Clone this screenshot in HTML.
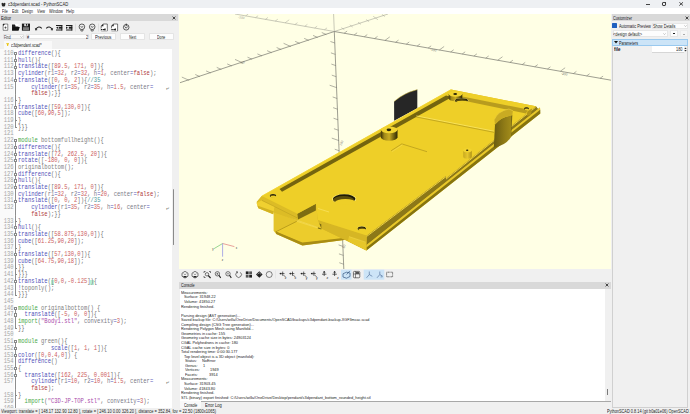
<!DOCTYPE html>
<html><head><meta charset="utf-8">
<style>
*{box-sizing:border-box;margin:0;padding:0}
html,body{width:690px;height:414px;overflow:hidden;background:#f0f0f0;font-family:"Liberation Sans",sans-serif;color:#000;position:relative}
i{font-style:normal}
.abs{position:absolute}
.ln{position:absolute;left:0;width:13.6px;text-align:right;font-family:"Liberation Mono",monospace;font-size:6.3px;line-height:6.7px;color:#a4a4a4;white-space:pre;transform:scaleX(0.87);transform-origin:100% 50%}
.cl{position:absolute;left:17.9px;font-family:"Liberation Mono",monospace;font-size:6.4px;line-height:6.7px;white-space:pre;transform:scaleX(0.859);transform-origin:0 50%}
.fbox{position:absolute;left:14.3px;width:3.2px;height:3.2px;border:0.6px solid #8a8a8a;background:#fff}
.fend{position:absolute;left:15.2px;width:1.8px;height:3.4px;border-left:0.7px solid #8a8a8a;border-bottom:0.7px solid #8a8a8a}
.wrapg{position:absolute;left:165.5px;font-size:5.5px;line-height:6.7px;color:#444}
.con{position:absolute;font-size:4.3px;line-height:5px;color:#1a1a1a;white-space:pre;transform:scaleX(0.87);transform-origin:0 50%}

</style></head><body>

<div class="abs" style="left:0;top:0;width:690px;height:8px;background:#eef0f3"></div>
<svg class="abs" style="left:0.8px;top:1.6px" width="5" height="5" viewBox="0 0 10 10"><path d="M1 3 Q3 0 5 3 Q7 0 9 3 L8 8 Q5 10 2 8Z" fill="#2a2a2a"/></svg>
<div class="abs" style="left:8.30px;top:1.88px;font-size:4.9px;line-height:5.63px;color:#1a1a1a;white-space:pre;transform:scaleX(0.855);transform-origin:0 50%;">c3dpendant.scad - PythonSCAD</div>
<div class="abs" style="left:646.2px;top:3.5px;width:3.5px;height:0.5px;background:#444"></div>
<div class="abs" style="left:661.8px;top:2.4px;width:4px;height:3.6px;border:0.8px solid #222;border-radius:1.2px"></div><div class="abs" style="left:662.8px;top:1.9px;width:3.5px;height:0.6px;background:#444"></div>
<svg class="abs" style="left:679px;top:2.2px" width="4.4" height="3.8" viewBox="0 0 4.4 3.8"><path d="M0.3 0.2 L4.1 3.6 M4.1 0.2 L0.3 3.6" stroke="#222" stroke-width="0.8"/></svg>
<div class="abs" style="left:0;top:8px;width:690px;height:5.8px;background:#ffffff"></div>
<div class="abs" style="left:2.10px;top:9.24px;font-size:4.8px;line-height:5.52px;color:#1a1a1a;white-space:pre;transform:scaleX(0.750);transform-origin:0 50%;">File</div><div class="abs" style="left:11.60px;top:9.24px;font-size:4.8px;line-height:5.52px;color:#1a1a1a;white-space:pre;transform:scaleX(0.774);transform-origin:0 50%;">Edit</div><div class="abs" style="left:22.00px;top:9.24px;font-size:4.8px;line-height:5.52px;color:#1a1a1a;white-space:pre;transform:scaleX(0.736);transform-origin:0 50%;">Design</div><div class="abs" style="left:37.10px;top:9.24px;font-size:4.8px;line-height:5.52px;color:#1a1a1a;white-space:pre;transform:scaleX(0.785);transform-origin:0 50%;">View</div><div class="abs" style="left:49.30px;top:9.24px;font-size:4.8px;line-height:5.52px;color:#1a1a1a;white-space:pre;transform:scaleX(0.814);transform-origin:0 50%;">Window</div><div class="abs" style="left:66.10px;top:9.24px;font-size:4.8px;line-height:5.52px;color:#1a1a1a;white-space:pre;transform:scaleX(0.821);transform-origin:0 50%;">Help</div>
<div class="abs" style="left:0;top:14px;width:178px;height:7px;background:#d9d9d9"></div>
<div class="abs" style="left:0.90px;top:15.74px;font-size:4.8px;line-height:5.52px;color:#1a1a1a;white-space:pre;transform:scaleX(0.806);transform-origin:0 50%;">Editor</div><svg class="abs" style="left:172px;top:15.9px" width="4" height="4" viewBox="0 0 4 4"><path d="M0.6 0.6 L3.4 3.4 M3.4 0.6 L0.6 3.4" stroke="#222" stroke-width="0.8"/></svg><svg class="abs" style="left:0;top:21px" width="178" height="12" viewBox="0 21 178 12"><path d="M2.6 23.4 H8.3 V30.8 H2.6 Z" fill="#fff"/><path d="M3.1 24 H7.8 V30.3 H3.1 Z" fill="none" stroke="#333" stroke-width="0.6"/><path d="M3 23.9 H5 L3 25.9Z" fill="#1e1e1e"/><path d="M4.4 27.6 H6.6 M5.5 26.5 V28.7" stroke="#1e1e1e" stroke-width="0.6"/><path d="M12 24.4 H14.6 L15.6 25.2 H18.4 V30.6 H12 Z" fill="#1e1e1e"/><path d="M15.2 24 L18.6 24.3 L19 26.5 L15.5 26.5Z" fill="#fff"/><path d="M13.2 27 H19.8 L18.6 30.6 H12 Z" fill="#111"/><path d="M21.9 23.6 H30 V30.7 H21.9 Z" fill="#1e1e1e"/><rect x="24.3" y="23.6" width="3.4" height="2.6" fill="#f4f4f4"/><rect x="25.8" y="23.9" width="1.2" height="1.8" fill="#1e1e1e"/><rect x="23" y="27.2" width="6" height="3" fill="#7a7a7a"/><path d="M36 29 Q38.5 25.3 41.8 28.3" stroke="#1e1e1e" stroke-width="1.1" fill="none"/><path d="M34.8 27.8 L37.5 30 L35.4 30.4Z" fill="#1e1e1e"/><path d="M52 29 Q49.5 25.3 46.2 28.3" stroke="#1e1e1e" stroke-width="1.1" fill="none"/><path d="M53.2 27.8 L50.5 30 L52.6 30.4Z" fill="#1e1e1e"/><rect x="56" y="25" width="6.3" height="1" fill="#1e1e1e"/><rect x="56" y="29.5" width="6.3" height="1" fill="#1e1e1e"/><rect x="58.8" y="26.7" width="3.5" height="2" fill="#1e1e1e"/><rect x="61.3" y="25" width="1" height="5.5" fill="#1e1e1e"/><path d="M58.2 26.5 L56 27.7 L58.2 28.9Z" fill="#1e1e1e"/><rect x="66" y="25" width="6.3" height="1" fill="#1e1e1e"/><rect x="66" y="29.5" width="6.3" height="1" fill="#1e1e1e"/><rect x="68.8" y="26.7" width="3.5" height="2" fill="#1e1e1e"/><rect x="71.3" y="25" width="1" height="5.5" fill="#1e1e1e"/><path d="M66 26.5 L68 27.7 L66 28.9Z" fill="#1e1e1e"/><rect x="75.5" y="23.5" width="0.5" height="8" fill="#cfcfcf"/><circle cx="81.9" cy="26.8" r="2.8" fill="none" stroke="#1e1e1e" stroke-width="0.7"/><path d="M80.9 29.6 V31 H82.9 V29.6" stroke="#1e1e1e" stroke-width="0.6" fill="none"/><path d="M80.60000000000001 26 L81.9 27.6 L83.2 26" stroke="#1e1e1e" stroke-width="0.6" fill="none"/><circle cx="92.2" cy="26.8" r="2.8" fill="none" stroke="#1e1e1e" stroke-width="0.7"/><path d="M91.2 29.6 V31 H93.2 V29.6" stroke="#1e1e1e" stroke-width="0.6" fill="none"/><path d="M90.9 26 L92.2 27.6 L93.5 26" stroke="#1e1e1e" stroke-width="0.6" fill="none"/><rect x="98.5" y="23.5" width="0.5" height="8" fill="#cfcfcf"/><path d="M103.2 24 H107.3 V30.8 H101.2 V26 Z" fill="#fff" stroke="#1e1e1e" stroke-width="0.6"/><path d="M101 26.2 L103.4 23.8 L103.4 26.2Z" fill="#1e1e1e"/><rect x="100.7" y="28.3" width="6" height="2.6" fill="#fff"/><path d="M101 29.6 h1.5 M103 29.6 h1.5 M105 28.6 v2" stroke="#1e1e1e" stroke-width="1.3"/><path d="M113.5 24 H117.6 V30.8 H111.5 V26 Z" fill="#fff" stroke="#1e1e1e" stroke-width="0.6"/><path d="M111.3 26.2 L113.7 23.8 L113.7 26.2Z" fill="#1e1e1e"/><rect x="111.0" y="28.3" width="6" height="2.6" fill="#fff"/><path d="M111.3 29.6 h1.5 M113.3 29.6 h1.5 M115.3 28.6 v2" stroke="#1e1e1e" stroke-width="1.3"/><circle cx="126.2" cy="27.3" r="2.8" fill="none" stroke="#1e1e1e" stroke-width="0.7"/><path d="M124.6 26.4 L126.2 28.2 L127.8 26.4" stroke="#1e1e1e" stroke-width="0.7" fill="none"/><rect x="125.8" y="23.6" width="0.8" height="2.5" fill="#1e1e1e"/></svg>
<div class="abs" style="left:2.6px;top:34.2px;width:21.5px;height:5px;background:#fafafa;border:0.5px solid #e2e2e2;border-radius:0.6px"></div>
<div class="abs" style="left:3.50px;top:34.91px;font-size:4.5px;line-height:5.17px;color:#333;white-space:pre;transform:scaleX(0.754);transform-origin:0 50%;">Find</div>
<svg class="abs" style="left:19.5px;top:35.6px" width="3" height="2" viewBox="0 0 3 2"><path d="M0.3 0.4 L1.5 1.5 L2.7 0.4" stroke="#777" stroke-width="0.4" fill="none"/></svg>
<div class="abs" style="left:26px;top:34.2px;width:62.7px;height:5px;background:#fff;border:0.4px solid #e4e4e4"></div>
<div class="abs" style="left:27.30px;top:34.91px;font-size:4.5px;line-height:5.17px;color:#222;white-space:pre;transform:scaleX(0.840);transform-origin:0 50%;">#</div><div class="abs" style="left:85.80px;top:34.91px;font-size:4.5px;line-height:5.17px;color:#222;white-space:pre;transform:scaleX(0.840);transform-origin:0 50%;">2</div>
<div class="abs" style="left:90.8px;top:33px;width:25.2px;height:7.3px;background:#fdfdfd;border:0.5px solid #e4e4e4;border-radius:0.8px;font-size:3.9px;line-height:6.5px;text-align:center;color:#222"></div><div class="abs" style="left:95.15px;top:34.91px;font-size:4.5px;line-height:5.17px;color:#222;white-space:pre;transform:scaleX(0.942);transform-origin:0 50%;">Previous</div>
<div class="abs" style="left:119.7px;top:33px;width:25.2px;height:7.3px;background:#fdfdfd;border:0.5px solid #e4e4e4;border-radius:0.8px;font-size:3.9px;line-height:6.5px;text-align:center;color:#222"></div><div class="abs" style="left:128.70px;top:34.91px;font-size:4.5px;line-height:5.17px;color:#222;white-space:pre;transform:scaleX(0.778);transform-origin:0 50%;">Next</div>
<div class="abs" style="left:148.6px;top:33px;width:25.7px;height:7.3px;background:#fdfdfd;border:0.5px solid #e4e4e4;border-radius:0.8px;font-size:3.9px;line-height:6.5px;text-align:center;color:#222"></div><div class="abs" style="left:157.40px;top:34.91px;font-size:4.5px;line-height:5.17px;color:#222;white-space:pre;transform:scaleX(0.762);transform-origin:0 50%;">Done</div>
<div class="abs" style="left:3.9px;top:41px;width:48.3px;height:7.5px;background:#f9f9f9"></div>
<svg class="abs" style="left:5.6px;top:42.6px" width="3.4" height="3.4" viewBox="0 0 4 4"><path d="M0 0.3 H4 L2.6 2 V3.8 H1.4 V2 Z" fill="#e8c000"/></svg>
<div class="abs" style="left:10.60px;top:42.95px;font-size:4.6px;line-height:5.29px;color:#222;white-space:pre;transform:scaleX(0.828);transform-origin:0 50%;font-style:italic;">c3dpendant.scad*</div>
<div class="abs" style="left:0;top:48.5px;width:172px;height:359px;background:#fff;overflow:hidden">
<div class="abs" style="left:0;top:0;width:14px;height:360px;background:#fafafa"></div>
<div class="abs" style="left:0;top:-48.5px;width:172px;height:408px">
<div class="ln" style="top:51.00px">110</div>
<div class="ln" style="top:57.70px">111</div>
<div class="ln" style="top:64.40px">112</div>
<div class="ln" style="top:71.10px">113</div>
<div class="ln" style="top:77.80px">114</div>
<div class="ln" style="top:84.50px">115</div>
<div class="ln" style="top:97.90px">116</div>
<div class="ln" style="top:104.60px">117</div>
<div class="ln" style="top:111.30px">118</div>
<div class="ln" style="top:118.00px">119</div>
<div class="ln" style="top:124.70px">120</div>
<div class="ln" style="top:131.40px">121</div>
<div class="ln" style="top:138.10px">122</div>
<div class="ln" style="top:144.80px">123</div>
<div class="ln" style="top:151.50px">124</div>
<div class="ln" style="top:158.20px">125</div>
<div class="ln" style="top:164.90px">126</div>
<div class="ln" style="top:171.60px">127</div>
<div class="ln" style="top:178.30px">128</div>
<div class="ln" style="top:185.00px">129</div>
<div class="ln" style="top:191.70px">130</div>
<div class="ln" style="top:198.40px">131</div>
<div class="ln" style="top:205.10px">132</div>
<div class="ln" style="top:218.50px">133</div>
<div class="ln" style="top:225.20px">134</div>
<div class="ln" style="top:231.90px">135</div>
<div class="ln" style="top:238.60px">136</div>
<div class="ln" style="top:245.30px">137</div>
<div class="ln" style="top:252.00px">138</div>
<div class="ln" style="top:258.70px">139</div>
<div class="ln" style="top:265.40px">140</div>
<div class="ln" style="top:272.10px">141</div>
<div class="ln" style="top:278.80px">142</div>
<div class="ln" style="top:285.50px">143</div>
<div class="ln" style="top:292.20px">144</div>
<div class="ln" style="top:298.90px">145</div>
<div class="ln" style="top:305.60px">146</div>
<div class="ln" style="top:312.30px">147</div>
<div class="ln" style="top:319.00px">148</div>
<div class="ln" style="top:325.70px">149</div>
<div class="ln" style="top:332.40px">150</div>
<div class="ln" style="top:339.10px">151</div>
<div class="ln" style="top:345.80px">152</div>
<div class="ln" style="top:352.50px">153</div>
<div class="ln" style="top:359.20px">154</div>
<div class="ln" style="top:365.90px">155</div>
<div class="ln" style="top:372.60px">156</div>
<div class="ln" style="top:379.30px">157</div>
<div class="ln" style="top:392.70px">158</div>
<div class="ln" style="top:399.40px">159</div>
<div class="ln" style="top:406.10px">160</div>
<div class="abs" style="left:15.3px;top:342.40px;width:0.7px;height:77.60px;background:#8e8e8e"></div>
<div class="abs" style="left:15.3px;top:308.90px;width:0.7px;height:20.10px;background:#8e8e8e"></div>
<div class="abs" style="left:15.3px;top:141.40px;width:0.7px;height:154.10px;background:#8e8e8e"></div>
<div class="abs" style="left:15.3px;top:54.30px;width:0.7px;height:73.70px;background:#8e8e8e"></div>
<div class="fbox" style="top:52.10px"></div>
<div class="fbox" style="top:58.80px"></div>
<div class="fbox" style="top:65.50px"></div>
<div class="fbox" style="top:78.90px"></div>
<div class="wrapg" style="top:84.50px">&#x2936;</div>
<div class="abs" style="left:14.5px;top:94.00px;width:1.6px;height:1px;background:#999"></div>
<div class="fend" style="top:97.90px"></div>
<div class="fbox" style="top:105.70px"></div>
<div class="fend" style="top:118.00px"></div>
<div class="fend" style="top:124.70px"></div>
<div class="fbox" style="top:139.20px"></div>
<div class="fbox" style="top:145.90px"></div>
<div class="fbox" style="top:152.60px"></div>
<div class="fbox" style="top:159.30px"></div>
<div class="fbox" style="top:172.70px"></div>
<div class="fbox" style="top:179.40px"></div>
<div class="fbox" style="top:186.10px"></div>
<div class="fbox" style="top:199.50px"></div>
<div class="wrapg" style="top:205.10px">&#x2936;</div>
<div class="abs" style="left:14.5px;top:214.60px;width:1.6px;height:1px;background:#999"></div>
<div class="fend" style="top:218.50px"></div>
<div class="fbox" style="top:226.30px"></div>
<div class="fbox" style="top:233.00px"></div>
<div class="fend" style="top:245.30px"></div>
<div class="fbox" style="top:253.10px"></div>
<div class="fend" style="top:265.40px"></div>
<div class="fend" style="top:272.10px"></div>
<div class="abs" style="left:50.80px;top:279.70px;width:3.5px;height:5.2px;background:#b8f0d8"></div>
<div class="abs" style="left:90.40px;top:279.70px;width:3.5px;height:5.2px;background:#b8f0d8"></div>
<div class="fbox" style="top:279.90px"></div>
<div class="fend" style="top:292.20px"></div>
<div class="fbox" style="top:306.70px"></div>
<div class="fbox" style="top:313.40px"></div>
<div class="fend" style="top:325.70px"></div>
<div class="fbox" style="top:340.20px"></div>
<div class="fbox" style="top:346.90px"></div>
<div class="fbox" style="top:353.60px"></div>
<div class="fbox" style="top:367.00px"></div>
<div class="fbox" style="top:373.70px"></div>
<div class="wrapg" style="top:379.30px">&#x2936;</div>
<div class="abs" style="left:14.5px;top:388.80px;width:1.6px;height:1px;background:#999"></div>
<div class="fend" style="top:392.70px"></div>
<div class="cl" style="top:51.00px"><i style="color:#5050b8">difference</i><i style="color:#707070">(</i><i style="color:#707070">)</i><i style="color:#707070">{</i></div>
<div class="cl" style="top:57.70px"><i style="color:#5050b8">hull</i><i style="color:#707070">(</i><i style="color:#707070">)</i><i style="color:#707070">{</i></div>
<div class="cl" style="top:64.40px"><i style="color:#5050b8">translate</i><i style="color:#707070">(</i><i style="color:#707070">[</i><i style="color:#cc5c5c">89.5</i><i style="color:#707070">,</i> <i style="color:#cc5c5c">171</i><i style="color:#707070">,</i> <i style="color:#cc5c5c">0</i><i style="color:#707070">]</i><i style="color:#707070">)</i><i style="color:#707070">{</i></div>
<div class="cl" style="top:71.10px"><i style="color:#5050b8">cylinder</i><i style="color:#707070">(</i><i style="color:#7a7a86">r1</i><i style="color:#5a5ab8">=</i><i style="color:#cc5c5c">32</i><i style="color:#707070">,</i> <i style="color:#7a7a86">r2</i><i style="color:#5a5ab8">=</i><i style="color:#cc5c5c">32</i><i style="color:#707070">,</i> <i style="color:#7a7a86">h</i><i style="color:#5a5ab8">=</i><i style="color:#cc5c5c">1</i><i style="color:#707070">,</i> <i style="color:#7a7a86">center</i><i style="color:#5a5ab8">=</i><i style="color:#b03a3a">false</i><i style="color:#707070">)</i><i style="color:#707070">;</i></div>
<div class="cl" style="top:77.80px"><i style="color:#5050b8">translate</i><i style="color:#707070">(</i><i style="color:#707070">[</i><i style="color:#cc5c5c">0</i><i style="color:#707070">,</i> <i style="color:#cc5c5c">0</i><i style="color:#707070">,</i> <i style="color:#cc5c5c">2</i><i style="color:#707070">]</i><i style="color:#707070">)</i><i style="color:#707070">{</i><i style="color:#4a9a9a">//35</i></div>
<div class="cl" style="top:84.50px">    <i style="color:#5050b8">cylinder</i><i style="color:#707070">(</i><i style="color:#7a7a86">r1</i><i style="color:#5a5ab8">=</i><i style="color:#cc5c5c">35</i><i style="color:#707070">,</i> <i style="color:#7a7a86">r2</i><i style="color:#5a5ab8">=</i><i style="color:#cc5c5c">35</i><i style="color:#707070">,</i> <i style="color:#7a7a86">h</i><i style="color:#5a5ab8">=</i><i style="color:#cc5c5c">1.5</i><i style="color:#707070">,</i> <i style="color:#7a7a86">center</i><i style="color:#5a5ab8">=</i></div>
<div class="cl" style="top:91.20px">    <i style="color:#b03a3a">false</i><i style="color:#707070">)</i><i style="color:#707070">;</i><i style="color:#707070">}</i><i style="color:#707070">}</i></div>
<div class="cl" style="top:97.90px"><i style="color:#707070">}</i></div>
<div class="cl" style="top:104.60px"><i style="color:#5050b8">translate</i><i style="color:#707070">(</i><i style="color:#707070">[</i><i style="color:#cc5c5c">59</i><i style="color:#707070">,</i><i style="color:#cc5c5c">130</i><i style="color:#707070">,</i><i style="color:#cc5c5c">0</i><i style="color:#707070">]</i><i style="color:#707070">)</i><i style="color:#707070">{</i></div>
<div class="cl" style="top:111.30px"><i style="color:#5050b8">cube</i><i style="color:#707070">(</i><i style="color:#707070">[</i><i style="color:#cc5c5c">60</i><i style="color:#707070">,</i><i style="color:#cc5c5c">90</i><i style="color:#707070">,</i><i style="color:#cc5c5c">5</i><i style="color:#707070">]</i><i style="color:#707070">)</i><i style="color:#707070">;</i></div>
<div class="cl" style="top:118.00px"><i style="color:#707070">}</i></div>
<div class="cl" style="top:124.70px"><i style="color:#707070">}</i><i style="color:#707070">}</i><i style="color:#707070">}</i></div>
<div class="cl" style="top:131.40px"></div>
<div class="cl" style="top:138.10px"><i style="color:#48a848">module</i> <i style="color:#808080">bottomfullheight</i><i style="color:#707070">(</i><i style="color:#707070">)</i><i style="color:#707070">{</i></div>
<div class="cl" style="top:144.80px"><i style="color:#5050b8">difference</i><i style="color:#707070">(</i><i style="color:#707070">)</i><i style="color:#707070">{</i></div>
<div class="cl" style="top:151.50px"><i style="color:#5050b8">translate</i><i style="color:#707070">(</i><i style="color:#707070">[</i><i style="color:#cc5c5c">72</i><i style="color:#707070">,</i> <i style="color:#cc5c5c">262.5</i><i style="color:#707070">,</i> <i style="color:#cc5c5c">20</i><i style="color:#707070">]</i><i style="color:#707070">)</i><i style="color:#707070">{</i></div>
<div class="cl" style="top:158.20px"><i style="color:#5050b8">rotate</i><i style="color:#707070">(</i><i style="color:#707070">[</i><i style="color:#cc5c5c">-180</i><i style="color:#707070">,</i> <i style="color:#cc5c5c">0</i><i style="color:#707070">,</i> <i style="color:#cc5c5c">0</i><i style="color:#707070">]</i><i style="color:#707070">)</i><i style="color:#707070">{</i></div>
<div class="cl" style="top:164.90px"><i style="color:#808080">originalbottom</i><i style="color:#707070">(</i><i style="color:#707070">)</i><i style="color:#707070">;</i></div>
<div class="cl" style="top:171.60px"><i style="color:#5050b8">difference</i><i style="color:#707070">(</i><i style="color:#707070">)</i><i style="color:#707070">{</i></div>
<div class="cl" style="top:178.30px"><i style="color:#5050b8">hull</i><i style="color:#707070">(</i><i style="color:#707070">)</i><i style="color:#707070">{</i></div>
<div class="cl" style="top:185.00px"><i style="color:#5050b8">translate</i><i style="color:#707070">(</i><i style="color:#707070">[</i><i style="color:#cc5c5c">89.5</i><i style="color:#707070">,</i> <i style="color:#cc5c5c">171</i><i style="color:#707070">,</i> <i style="color:#cc5c5c">0</i><i style="color:#707070">]</i><i style="color:#707070">)</i><i style="color:#707070">{</i></div>
<div class="cl" style="top:191.70px"><i style="color:#5050b8">cylinder</i><i style="color:#707070">(</i><i style="color:#7a7a86">r1</i><i style="color:#5a5ab8">=</i><i style="color:#cc5c5c">32</i><i style="color:#707070">,</i> <i style="color:#7a7a86">r2</i><i style="color:#5a5ab8">=</i><i style="color:#cc5c5c">32</i><i style="color:#707070">,</i> <i style="color:#7a7a86">h</i><i style="color:#5a5ab8">=</i><i style="color:#cc5c5c">20</i><i style="color:#707070">,</i> <i style="color:#7a7a86">center</i><i style="color:#5a5ab8">=</i><i style="color:#b03a3a">false</i><i style="color:#707070">)</i><i style="color:#707070">;</i></div>
<div class="cl" style="top:198.40px"><i style="color:#5050b8">translate</i><i style="color:#707070">(</i><i style="color:#707070">[</i><i style="color:#cc5c5c">0</i><i style="color:#707070">,</i> <i style="color:#cc5c5c">0</i><i style="color:#707070">,</i> <i style="color:#cc5c5c">2</i><i style="color:#707070">]</i><i style="color:#707070">)</i><i style="color:#707070">{</i><i style="color:#4a9a9a">//35</i></div>
<div class="cl" style="top:205.10px">    <i style="color:#5050b8">cylinder</i><i style="color:#707070">(</i><i style="color:#7a7a86">r1</i><i style="color:#5a5ab8">=</i><i style="color:#cc5c5c">35</i><i style="color:#707070">,</i> <i style="color:#7a7a86">r2</i><i style="color:#5a5ab8">=</i><i style="color:#cc5c5c">35</i><i style="color:#707070">,</i> <i style="color:#7a7a86">h</i><i style="color:#5a5ab8">=</i><i style="color:#cc5c5c">16</i><i style="color:#707070">,</i> <i style="color:#7a7a86">center</i><i style="color:#5a5ab8">=</i></div>
<div class="cl" style="top:211.80px">    <i style="color:#b03a3a">false</i><i style="color:#707070">)</i><i style="color:#707070">;</i><i style="color:#707070">}</i><i style="color:#707070">}</i></div>
<div class="cl" style="top:218.50px"><i style="color:#707070">}</i></div>
<div class="cl" style="top:225.20px"><i style="color:#5050b8">hull</i><i style="color:#707070">(</i><i style="color:#707070">)</i><i style="color:#707070">{</i></div>
<div class="cl" style="top:231.90px"><i style="color:#5050b8">translate</i><i style="color:#707070">(</i><i style="color:#707070">[</i><i style="color:#cc5c5c">58.875</i><i style="color:#707070">,</i><i style="color:#cc5c5c">130</i><i style="color:#707070">,</i><i style="color:#cc5c5c">0</i><i style="color:#707070">]</i><i style="color:#707070">)</i><i style="color:#707070">{</i></div>
<div class="cl" style="top:238.60px"><i style="color:#5050b8">cube</i><i style="color:#707070">(</i><i style="color:#707070">[</i><i style="color:#cc5c5c">61.25</i><i style="color:#707070">,</i><i style="color:#cc5c5c">90</i><i style="color:#707070">,</i><i style="color:#cc5c5c">20</i><i style="color:#707070">]</i><i style="color:#707070">)</i><i style="color:#707070">;</i></div>
<div class="cl" style="top:245.30px"><i style="color:#707070">}</i></div>
<div class="cl" style="top:252.00px"><i style="color:#5050b8">translate</i><i style="color:#707070">(</i><i style="color:#707070">[</i><i style="color:#cc5c5c">57</i><i style="color:#707070">,</i><i style="color:#cc5c5c">130</i><i style="color:#707070">,</i><i style="color:#cc5c5c">0</i><i style="color:#707070">]</i><i style="color:#707070">)</i><i style="color:#707070">{</i></div>
<div class="cl" style="top:258.70px"><i style="color:#5050b8">cube</i><i style="color:#707070">(</i><i style="color:#707070">[</i><i style="color:#cc5c5c">64.75</i><i style="color:#707070">,</i><i style="color:#cc5c5c">90</i><i style="color:#707070">,</i><i style="color:#cc5c5c">18</i><i style="color:#707070">]</i><i style="color:#707070">)</i><i style="color:#707070">;</i></div>
<div class="cl" style="top:265.40px"><i style="color:#707070">}</i><i style="color:#707070">}</i></div>
<div class="cl" style="top:272.10px"><i style="color:#707070">}</i><i style="color:#707070">}</i><i style="color:#707070">}</i></div>
<div class="cl" style="top:278.80px"><i style="color:#5050b8">translate</i><i style="color:#707070">(</i><i style="color:#707070">[</i><i style="color:#cc5c5c">0</i><i style="color:#707070">,</i><i style="color:#cc5c5c">0</i><i style="color:#707070">,</i><i style="color:#cc5c5c">-0.125</i><i style="color:#707070">]</i><i style="color:#707070">)</i><i style="color:#707070">{</i></div>
<div class="cl" style="top:285.50px"><i style="color:#5050b8">!</i><i style="color:#808080">toponly</i><i style="color:#707070">(</i><i style="color:#707070">)</i><i style="color:#707070">;</i></div>
<div class="cl" style="top:292.20px"><i style="color:#707070">}</i><i style="color:#707070">}</i><i style="color:#707070">}</i></div>
<div class="cl" style="top:298.90px"></div>
<div class="cl" style="top:305.60px"><i style="color:#48a848">module</i> <i style="color:#808080">originalbottom</i><i style="color:#707070">(</i><i style="color:#707070">)</i> <i style="color:#707070">{</i></div>
<div class="cl" style="top:312.30px">  <i style="color:#5050b8">translate</i><i style="color:#707070">(</i><i style="color:#707070">[</i><i style="color:#cc5c5c">-5</i><i style="color:#707070">,</i> <i style="color:#cc5c5c">0</i><i style="color:#707070">,</i> <i style="color:#cc5c5c">0</i><i style="color:#707070">]</i><i style="color:#707070">)</i><i style="color:#707070">{</i></div>
<div class="cl" style="top:319.00px"><i style="color:#48a848">import</i><i style="color:#707070">(</i><i style="color:#a848a8">&quot;Body1.stl&quot;</i><i style="color:#707070">,</i> <i style="color:#7a7a86">convexity</i><i style="color:#5a5ab8">=</i><i style="color:#cc5c5c">3</i><i style="color:#707070">)</i><i style="color:#707070">;</i></div>
<div class="cl" style="top:325.70px"><i style="color:#707070">}</i><i style="color:#707070">}</i></div>
<div class="cl" style="top:332.40px"></div>
<div class="cl" style="top:339.10px"><i style="color:#48a848">module</i> <i style="color:#808080">green</i><i style="color:#707070">(</i><i style="color:#707070">)</i><i style="color:#707070">{</i></div>
<div class="cl" style="top:345.80px">          <i style="color:#5050b8">scale</i><i style="color:#707070">(</i><i style="color:#707070">[</i><i style="color:#cc5c5c">1</i><i style="color:#707070">,</i> <i style="color:#cc5c5c">1</i><i style="color:#707070">,</i> <i style="color:#cc5c5c">1</i><i style="color:#707070">]</i><i style="color:#707070">)</i><i style="color:#707070">{</i></div>
<div class="cl" style="top:352.50px"><i style="color:#5050b8">color</i><i style="color:#707070">(</i><i style="color:#707070">[</i><i style="color:#cc5c5c">0</i><i style="color:#707070">,</i><i style="color:#cc5c5c">0.4</i><i style="color:#707070">,</i><i style="color:#cc5c5c">0</i><i style="color:#707070">]</i><i style="color:#707070">)</i> <i style="color:#707070">{</i></div>
<div class="cl" style="top:359.20px"><i style="color:#5050b8">difference</i><i style="color:#707070">(</i><i style="color:#707070">)</i></div>
<div class="cl" style="top:365.90px"><i style="color:#707070">{</i></div>
<div class="cl" style="top:372.60px">  <i style="color:#5050b8">translate</i><i style="color:#707070">(</i><i style="color:#707070">[</i><i style="color:#cc5c5c">162</i><i style="color:#707070">,</i> <i style="color:#cc5c5c">225</i><i style="color:#707070">,</i> <i style="color:#cc5c5c">0.001</i><i style="color:#707070">]</i><i style="color:#707070">)</i><i style="color:#707070">{</i></div>
<div class="cl" style="top:379.30px">    <i style="color:#5050b8">cylinder</i><i style="color:#707070">(</i><i style="color:#7a7a86">r1</i><i style="color:#5a5ab8">=</i><i style="color:#cc5c5c">10</i><i style="color:#707070">,</i> <i style="color:#7a7a86">r2</i><i style="color:#5a5ab8">=</i><i style="color:#cc5c5c">10</i><i style="color:#707070">,</i> <i style="color:#7a7a86">h</i><i style="color:#5a5ab8">=</i><i style="color:#cc5c5c">1.5</i><i style="color:#707070">,</i> <i style="color:#7a7a86">center</i><i style="color:#5a5ab8">=</i></div>
<div class="cl" style="top:386.00px">    <i style="color:#b03a3a">false</i><i style="color:#707070">)</i><i style="color:#707070">;</i></div>
<div class="cl" style="top:392.70px"><i style="color:#707070">}</i></div>
<div class="cl" style="top:399.40px">  <i style="color:#48a848">import</i><i style="color:#707070">(</i><i style="color:#a848a8">&quot;C3D-JP-TOP.stl&quot;</i><i style="color:#707070">,</i> <i style="color:#7a7a86">convexity</i><i style="color:#5a5ab8">=</i><i style="color:#cc5c5c">3</i><i style="color:#707070">)</i><i style="color:#707070">;</i></div>
<div class="cl" style="top:406.10px"></div>
</div></div>
<div class="abs" style="left:172.6px;top:189px;width:1.4px;height:56px;background:#8a8a8a;border-radius:0.7px"></div>
<div class="abs" style="left:179.3px;top:13.8px;width:431.7px;height:255.2px;background:#ffffe5;overflow:hidden"><svg class="abs" style="left:-179.3px;top:-13.8px" width="611" height="269" viewBox="0 0 611 269"><line x1="334.30" y1="31.50" x2="180.00" y2="82.70" stroke="#74746c" stroke-width="0.7" /><line x1="334.30" y1="31.50" x2="388.00" y2="14.00" stroke="#a4a498" stroke-width="0.6" /><line x1="334.30" y1="31.50" x2="235.00" y2="14.00" stroke="#a4a498" stroke-width="0.6" /><line x1="334.30" y1="31.50" x2="611.00" y2="80.20" stroke="#74746c" stroke-width="0.7" /><line x1="334.30" y1="31.50" x2="333.60" y2="14.00" stroke="#a4a498" stroke-width="0.6" /><line x1="334.30" y1="31.50" x2="343.80" y2="269.00" stroke="#74746c" stroke-width="0.7" /><line x1="321.76" y1="32.53" x2="326.36" y2="34.58" stroke="#74746c" stroke-width="0.55" /><line x1="313.06" y1="35.42" x2="317.66" y2="37.47" stroke="#74746c" stroke-width="0.55" /><line x1="304.20" y1="38.36" x2="308.80" y2="40.41" stroke="#74746c" stroke-width="0.55" /><line x1="295.17" y1="41.36" x2="299.77" y2="43.41" stroke="#74746c" stroke-width="0.55" /><line x1="283.58" y1="43.32" x2="290.94" y2="46.60" stroke="#74746c" stroke-width="0.55" /><line x1="276.62" y1="47.51" x2="281.22" y2="49.56" stroke="#74746c" stroke-width="0.55" /><line x1="267.09" y1="50.67" x2="271.69" y2="52.72" stroke="#74746c" stroke-width="0.55" /><line x1="257.38" y1="53.90" x2="261.98" y2="55.95" stroke="#74746c" stroke-width="0.55" /><line x1="247.50" y1="57.18" x2="252.10" y2="59.23" stroke="#74746c" stroke-width="0.55" /><line x1="235.03" y1="59.44" x2="242.39" y2="62.72" stroke="#74746c" stroke-width="0.55" /><line x1="227.17" y1="63.92" x2="231.77" y2="65.97" stroke="#74746c" stroke-width="0.55" /><line x1="216.73" y1="67.39" x2="221.33" y2="69.44" stroke="#74746c" stroke-width="0.55" /><line x1="206.09" y1="70.92" x2="210.69" y2="72.97" stroke="#74746c" stroke-width="0.55" /><line x1="195.25" y1="74.51" x2="199.85" y2="76.56" stroke="#74746c" stroke-width="0.55" /><line x1="181.82" y1="77.09" x2="189.18" y2="80.37" stroke="#74746c" stroke-width="0.55" /><line x1="341.36" y1="27.61" x2="344.36" y2="29.81" stroke="#a4a498" stroke-width="0.5" /><line x1="349.76" y1="24.87" x2="352.76" y2="27.07" stroke="#a4a498" stroke-width="0.5" /><line x1="358.02" y1="22.18" x2="361.02" y2="24.38" stroke="#a4a498" stroke-width="0.5" /><line x1="366.13" y1="19.54" x2="369.13" y2="21.74" stroke="#a4a498" stroke-width="0.5" /><line x1="373.20" y1="16.28" x2="378.00" y2="19.80" stroke="#a4a498" stroke-width="0.5" /><line x1="381.92" y1="14.39" x2="384.92" y2="16.59" stroke="#a4a498" stroke-width="0.5" /><line x1="324.45" y1="29.76" x2="327.05" y2="27.86" stroke="#a4a498" stroke-width="0.5" /><line x1="314.60" y1="28.03" x2="317.20" y2="26.13" stroke="#a4a498" stroke-width="0.5" /><line x1="304.76" y1="26.29" x2="307.36" y2="24.39" stroke="#a4a498" stroke-width="0.5" /><line x1="294.91" y1="24.56" x2="297.51" y2="22.66" stroke="#a4a498" stroke-width="0.5" /><line x1="285.06" y1="22.82" x2="289.22" y2="19.78" stroke="#a4a498" stroke-width="0.5" /><line x1="275.21" y1="21.09" x2="277.81" y2="19.19" stroke="#a4a498" stroke-width="0.5" /><line x1="265.36" y1="19.35" x2="267.96" y2="17.45" stroke="#a4a498" stroke-width="0.5" /><line x1="255.51" y1="17.62" x2="258.11" y2="15.72" stroke="#a4a498" stroke-width="0.5" /><line x1="245.67" y1="15.88" x2="248.27" y2="13.98" stroke="#a4a498" stroke-width="0.5" /><line x1="344.15" y1="33.23" x2="347.15" y2="31.03" stroke="#74746c" stroke-width="0.55" /><line x1="354.14" y1="34.99" x2="357.14" y2="32.79" stroke="#74746c" stroke-width="0.55" /><line x1="364.27" y1="36.77" x2="367.27" y2="34.57" stroke="#74746c" stroke-width="0.55" /><line x1="374.54" y1="38.58" x2="377.54" y2="36.38" stroke="#74746c" stroke-width="0.55" /><line x1="384.97" y1="40.42" x2="389.77" y2="36.90" stroke="#74746c" stroke-width="0.55" /><line x1="395.54" y1="42.28" x2="398.54" y2="40.08" stroke="#74746c" stroke-width="0.55" /><line x1="406.26" y1="44.16" x2="409.26" y2="41.96" stroke="#74746c" stroke-width="0.55" /><line x1="417.13" y1="46.08" x2="420.13" y2="43.88" stroke="#74746c" stroke-width="0.55" /><line x1="428.16" y1="48.02" x2="431.16" y2="45.82" stroke="#74746c" stroke-width="0.55" /><line x1="439.34" y1="49.99" x2="444.14" y2="46.47" stroke="#74746c" stroke-width="0.55" /><line x1="450.69" y1="51.98" x2="453.69" y2="49.78" stroke="#74746c" stroke-width="0.55" /><line x1="462.19" y1="54.01" x2="465.19" y2="51.81" stroke="#74746c" stroke-width="0.55" /><line x1="473.86" y1="56.06" x2="476.86" y2="53.86" stroke="#74746c" stroke-width="0.55" /><line x1="485.70" y1="58.15" x2="488.70" y2="55.95" stroke="#74746c" stroke-width="0.55" /><line x1="497.70" y1="60.26" x2="502.50" y2="56.74" stroke="#74746c" stroke-width="0.55" /><line x1="509.88" y1="62.40" x2="512.88" y2="60.20" stroke="#74746c" stroke-width="0.55" /><line x1="522.22" y1="64.58" x2="525.22" y2="62.38" stroke="#74746c" stroke-width="0.55" /><line x1="534.75" y1="66.78" x2="537.75" y2="64.58" stroke="#74746c" stroke-width="0.55" /><line x1="547.45" y1="69.02" x2="550.45" y2="66.82" stroke="#74746c" stroke-width="0.55" /><line x1="560.33" y1="71.28" x2="565.13" y2="67.76" stroke="#74746c" stroke-width="0.55" /><line x1="573.40" y1="73.58" x2="576.40" y2="71.38" stroke="#74746c" stroke-width="0.55" /><line x1="586.65" y1="75.91" x2="589.65" y2="73.71" stroke="#74746c" stroke-width="0.55" /><line x1="600.09" y1="78.28" x2="603.09" y2="76.08" stroke="#74746c" stroke-width="0.55" /><line x1="334.96" y1="43.06" x2="330.46" y2="41.49" stroke="#74746c" stroke-width="0.55" /><line x1="335.41" y1="54.42" x2="330.91" y2="52.85" stroke="#74746c" stroke-width="0.55" /><line x1="335.86" y1="65.64" x2="331.36" y2="64.07" stroke="#74746c" stroke-width="0.55" /><line x1="336.31" y1="76.73" x2="331.81" y2="75.16" stroke="#74746c" stroke-width="0.55" /><line x1="336.86" y1="87.73" x2="329.66" y2="85.22" stroke="#74746c" stroke-width="0.55" /><line x1="337.18" y1="98.52" x2="332.68" y2="96.95" stroke="#74746c" stroke-width="0.55" /><line x1="337.61" y1="109.22" x2="333.11" y2="107.65" stroke="#74746c" stroke-width="0.55" /><line x1="338.03" y1="119.79" x2="333.53" y2="118.22" stroke="#74746c" stroke-width="0.55" /><line x1="338.45" y1="130.25" x2="333.95" y2="128.68" stroke="#74746c" stroke-width="0.55" /><line x1="338.98" y1="140.62" x2="331.78" y2="138.10" stroke="#74746c" stroke-width="0.55" /><line x1="339.27" y1="150.78" x2="334.77" y2="149.21" stroke="#74746c" stroke-width="0.55" /><line x1="339.67" y1="160.87" x2="335.17" y2="159.30" stroke="#74746c" stroke-width="0.55" /><line x1="340.07" y1="170.84" x2="335.57" y2="169.27" stroke="#74746c" stroke-width="0.55" /><line x1="340.46" y1="180.69" x2="335.96" y2="179.12" stroke="#74746c" stroke-width="0.55" /><line x1="340.97" y1="190.46" x2="333.77" y2="187.95" stroke="#74746c" stroke-width="0.55" /><line x1="341.24" y1="200.04" x2="336.74" y2="198.47" stroke="#74746c" stroke-width="0.55" /><line x1="341.62" y1="209.55" x2="337.12" y2="207.98" stroke="#74746c" stroke-width="0.55" /><line x1="341.99" y1="218.94" x2="337.49" y2="217.37" stroke="#74746c" stroke-width="0.55" /><line x1="342.37" y1="228.22" x2="337.87" y2="226.65" stroke="#74746c" stroke-width="0.55" /><line x1="342.85" y1="237.44" x2="335.65" y2="234.93" stroke="#74746c" stroke-width="0.55" /><line x1="343.10" y1="246.46" x2="338.60" y2="244.89" stroke="#74746c" stroke-width="0.55" /><line x1="343.45" y1="255.42" x2="338.95" y2="253.85" stroke="#74746c" stroke-width="0.55" /><line x1="343.81" y1="264.28" x2="339.31" y2="262.71" stroke="#74746c" stroke-width="0.55" /><text x="240.5" y="64.5" font-size="3.2" fill="#707068" font-family="Liberation Sans" transform="rotate(-18 240.5 64.5)">-50</text><text x="238" y="18" font-size="3.2" fill="#90908a" font-family="Liberation Sans" transform="rotate(10 238 18)">-100</text><text x="430" y="50.5" font-size="3.2" fill="#707068" font-family="Liberation Sans" transform="rotate(10 430 50.5)">-100</text><text x="561" y="74.5" font-size="3.2" fill="#707068" font-family="Liberation Sans" transform="rotate(10 561 74.5)">-200</text><text x="341.5" y="146" font-size="3.2" fill="#707068" font-family="Liberation Sans" transform="rotate(-70 341.5 146)">100</text><text x="344.5" y="248.5" font-size="3.2" fill="#707068" font-family="Liberation Sans" transform="rotate(-70 344.5 248.5)">50</text><defs><linearGradient id="cyl" x1="0" x2="1"><stop offset="0" stop-color="#6a5c10"/><stop offset="0.55" stop-color="#8e7a16"/><stop offset="0.9" stop-color="#a08a1a"/><stop offset="1" stop-color="#5e5210"/></linearGradient><linearGradient id="boss" x1="0" x2="1"><stop offset="0" stop-color="#3e3406"/><stop offset="0.2" stop-color="#a08818"/><stop offset="0.5" stop-color="#caac22"/><stop offset="0.8" stop-color="#6a5a0e"/><stop offset="1" stop-color="#2e2804"/></linearGradient><linearGradient id="bossl" x1="0" x2="1"><stop offset="0" stop-color="#c8aa20"/><stop offset="0.5" stop-color="#e6c62c"/><stop offset="1" stop-color="#b09418"/></linearGradient></defs><path d="M394.1 101.4 Q404 93 417.3 89.6 L417.3 108.2 L394.1 120.7 Z" fill="#262626"/><path d="M394.1 101.4 Q404 93 417.3 89.6" stroke="#d8c040" stroke-width="0.5" fill="none"/><polygon points="273.60,211.30 273.60,230.80 276.20,234.10 302.40,245.40 347.80,239.60 349.50,238.80 321.30,228.60 298.10,220.60 273.60,211.30" fill="#e4c42a" /><polygon points="275.50,230.80 302.40,242.00 348.00,236.80 349.50,238.80 347.80,239.60 302.40,245.40 276.20,234.10" fill="#a88c14" /><polygon points="276.20,231.60 296.50,221.50 298.10,220.60 321.30,228.60 347.80,237.50 302.40,242.60" fill="#eccc2c" /><line x1="276.20" y1="231.60" x2="296.80" y2="221.30" stroke="#a88c16" stroke-width="0.7" /><line x1="296.80" y1="221.30" x2="321.00" y2="229.00" stroke="#f8e060" stroke-width="0.5" /><polygon points="451.00,89.60 535.90,106.30 539.90,111.50 540.30,113.53 366.40,250.60 347.80,241.20 321.30,228.60 298.10,220.60 272.80,212.10 258.40,207.00 256.70,202.00 261.80,196.10" fill="#d9b926" /><polygon points="535.90,106.30 539.90,111.50 540.00,107.57 366.50,244.98 366.70,235.50 446.00,175.72 446.00,178.22" fill="#8c7818" /><polygon points="540.00,107.57 540.30,109.73 366.50,247.38 366.50,244.98" fill="#e8c82a" /><polygon points="540.30,109.73 540.30,113.53 366.40,250.60 366.50,247.38" fill="#86740f" /><polygon points="317.90,219.90 366.70,235.50 366.40,250.60 347.80,241.20 321.30,228.60 317.90,228.60" fill="#d6b624" /><polygon points="349.00,236.60 365.80,242.60 366.40,250.60 347.80,241.20" fill="#e6c62a" /><line x1="349.00" y1="236.60" x2="365.80" y2="242.20" stroke="#f6dc50" stroke-width="0.5" /><polygon points="315.90,212.10 317.90,219.90 317.90,228.60 321.30,229.50 321.30,224.30 318.50,223.20" fill="#7a6a12" /><polygon points="256.70,202.00 261.80,196.10 297.30,213.80 298.10,220.60 272.80,212.10 258.40,207.00" fill="#dcbc26" /><polygon points="256.50,203.10 261.30,200.40 274.50,206.60 273.20,214.20 258.40,208.20" fill="#f0d030" /><polygon points="258.40,208.20 273.20,214.20 273.60,211.30 257.20,205.40" fill="#d2b222" /><line x1="262.00" y1="200.40" x2="297.50" y2="218.00" stroke="#b89c1c" stroke-width="0.5" /><polygon points="297.30,213.80 315.90,203.70 317.90,219.90 321.30,228.60 298.10,220.60" fill="#ebcb2c" /><polygon points="297.30,213.80 315.90,203.70 315.90,210.50 298.10,219.60" fill="#7d6c12" /><line x1="298.10" y1="220.60" x2="318.00" y2="227.50" stroke="#f8e060" stroke-width="0.5" /><line x1="535.60" y1="107.20" x2="446.00" y2="179.12" stroke="#f6da48" stroke-width="0.9" /><line x1="446.00" y1="176.62" x2="366.70" y2="236.40" stroke="#f6da48" stroke-width="0.9" /><polygon points="451.00,89.60 535.90,106.30 446.00,178.22 446.00,175.72 366.70,235.50 317.90,219.90 315.90,203.70 297.30,213.80 261.80,196.10" fill="#eecf28" /><line x1="261.80" y1="196.10" x2="451.00" y2="89.60" stroke="#f8dc40" stroke-width="0.6" /><polygon points="279.50,188.93 446.00,95.40 452.00,97.02 282.00,191.73" fill="#74640f" /><polygon points="456.00,95.20 528.00,109.60 526.00,113.60 458.00,99.40" fill="#b89c1e" /><polygon points="527.50,111.20 532.00,108.50 531.00,115.00 526.50,116.00" fill="#b09418" /><line x1="416.30" y1="115.90" x2="494.00" y2="131.20" stroke="#fbe870" stroke-width="0.7" /><line x1="416.30" y1="117.00" x2="494.00" y2="132.30" stroke="#a88e18" stroke-width="0.6" /><line x1="318.00" y1="208.50" x2="329.00" y2="212.00" stroke="#fbe870" stroke-width="0.6" /><line x1="391.20" y1="150.70" x2="401.80" y2="143.90" stroke="#a68c18" stroke-width="0.6" /><line x1="401.80" y1="143.90" x2="427.00" y2="151.70" stroke="#a68c18" stroke-width="0.6" /><line x1="392.00" y1="151.60" x2="402.50" y2="144.90" stroke="#f8e070" stroke-width="0.4" /><path d="M380.9 129.8 V137.3 A8.3 3.4 0 0 0 397.5 137.3 V129.8 Z" fill="url(#boss)"/><ellipse cx="389.2" cy="129.8" rx="8.3" ry="3.4" fill="#f2d430"/><ellipse cx="388.9" cy="129.8" rx="2.3240000000000003" ry="1.36" fill="#2a2406"/><path d="M448.7 94 V98.5 A6.8 2.8 0 0 0 462.3 98.5 V94 Z" fill="url(#boss)"/><ellipse cx="455.5" cy="94" rx="6.8" ry="2.8" fill="#f2d430"/><ellipse cx="455.2" cy="94" rx="1.9040000000000001" ry="1.1199999999999999" fill="#2a2406"/><path d="M463.2 150.2 V156.7 A4.3 2.0 0 0 0 471.8 156.7 V150.2 Z" fill="url(#bossl)"/><ellipse cx="467.5" cy="150.2" rx="4.3" ry="2.0" fill="#f2d430"/><ellipse cx="467.2" cy="150.2" rx="1.204" ry="0.8" fill="#2a2406"/><ellipse cx="344.2" cy="199" rx="12" ry="4.9" fill="#fff080"/><ellipse cx="344.2" cy="198.755" rx="11.28" ry="4.41" fill="#1e1a04"/><ellipse cx="343.47999999999996" cy="199.735" rx="10.56" ry="3.6750000000000003" fill="#5a4c0c"/><ellipse cx="345.4" cy="201.94" rx="10.32" ry="2.842" fill="#eecf28"/><ellipse cx="361.8" cy="228.6" rx="4.3" ry="2.3" fill="#fff080"/><ellipse cx="361.8" cy="228.48499999999999" rx="4.042" ry="2.07" fill="#1e1a04"/><ellipse cx="361.54200000000003" cy="228.945" rx="3.784" ry="1.7249999999999999" fill="#5a4c0c"/><ellipse cx="362.23" cy="229.98" rx="3.698" ry="1.3339999999999999" fill="#eecf28"/><ellipse cx="273" cy="195.8" rx="3.4" ry="1.9" fill="#fff080"/><ellipse cx="273" cy="195.705" rx="3.1959999999999997" ry="1.71" fill="#1e1a04"/><ellipse cx="272.796" cy="196.085" rx="2.992" ry="1.4249999999999998" fill="#5a4c0c"/><ellipse cx="273.34" cy="196.94" rx="2.924" ry="1.1019999999999999" fill="#eecf28"/><ellipse cx="461.5" cy="100.6" rx="6.8" ry="2.6" fill="#fff080"/><ellipse cx="461.5" cy="100.47" rx="6.3919999999999995" ry="2.3400000000000003" fill="#1e1a04"/><ellipse cx="461.092" cy="100.99" rx="5.984" ry="1.9500000000000002" fill="#5a4c0c"/><ellipse cx="462.18" cy="102.16" rx="5.848" ry="1.508" fill="#eecf28"/><ellipse cx="526.5" cy="108.7" rx="2.6" ry="1.4" fill="#fff080"/><ellipse cx="526.5" cy="108.63000000000001" rx="2.444" ry="1.26" fill="#1e1a04"/><ellipse cx="526.344" cy="108.91" rx="2.2880000000000003" ry="1.0499999999999998" fill="#5a4c0c"/><ellipse cx="526.76" cy="109.54" rx="2.236" ry="0.8119999999999999" fill="#eecf28"/><path d="M495 124.6 Q501 116.5 512.3 115.3 L511.2 136.8 Q506 145.5 493.8 147.8 Z" fill="url(#cyl)"/><path d="M494.4 119.4 Q498 111 508.9 109 L512.9 110.7 L512.3 115.3 Q501 116.5 495 124.6 Z" fill="#c9ab22"/><path d="M494.4 119.4 Q498 111 508.9 109 L512.9 110.7" stroke="#ecd040" stroke-width="0.6" fill="none"/><line x1="222.60" y1="243.50" x2="234.40" y2="246.60" stroke="#e07a7a" stroke-width="0.7" /><line x1="222.60" y1="243.50" x2="214.10" y2="248.60" stroke="#6cc46c" stroke-width="0.7" /><line x1="222.60" y1="243.50" x2="222.60" y2="256.70" stroke="#8a8ae6" stroke-width="0.7" /><text x="235.8" y="249" font-size="2.8" fill="#333" font-family="Liberation Sans">x</text><text x="212.3" y="250.4" font-size="2.8" fill="#333" font-family="Liberation Sans">y</text><text x="221.7" y="260.6" font-size="2.8" fill="#333" font-family="Liberation Sans">z</text></svg></div>
<div class="abs" style="left:179px;top:269px;width:432px;height:13px;background:#f0f0f0"></div>
<div class="abs" style="left:179px;top:282px;width:432px;height:6.5px;background:#d9d9d9"></div>
<div class="abs" style="left:180.70px;top:283.14px;font-size:4.8px;line-height:5.52px;color:#1a1a1a;white-space:pre;transform:scaleX(0.772);transform-origin:0 50%;">Console</div>
<svg class="abs" style="left:604.6px;top:283.4px" width="4" height="4" viewBox="0 0 4 4"><path d="M0.6 0.6 L3.4 3.4 M3.4 0.6 L0.6 3.4" stroke="#222" stroke-width="0.8"/></svg>
<div class="abs" style="left:180px;top:288.5px;width:424.5px;height:112px;background:#fff;overflow:hidden"></div>
<div class="abs" style="left:604.5px;top:288.5px;width:6.5px;height:112px;background:#f0f0f0"></div>
<div class="abs" style="left:607px;top:388.6px;width:1.2px;height:6.8px;background:#7a7a7a"></div>
<div class="abs" style="left:180px;top:400.9px;width:431px;height:0.6px;background:#a8a8a8"></div>
<div class="abs" style="left:181.00px;top:289.87px;font-size:4.4px;line-height:5.06px;color:#1a1a1a;white-space:pre;transform:scaleX(0.880);transform-origin:0 50%;">Measurements:</div><div class="abs" style="left:184.20px;top:294.43px;font-size:4.4px;line-height:5.06px;color:#1a1a1a;white-space:pre;transform:scaleX(0.880);transform-origin:0 50%;">Surface: 31948.22</div><div class="abs" style="left:184.20px;top:298.98px;font-size:4.4px;line-height:5.06px;color:#1a1a1a;white-space:pre;transform:scaleX(0.880);transform-origin:0 50%;">Volume: 41850.27</div><div class="abs" style="left:181.00px;top:303.54px;font-size:4.4px;line-height:5.06px;color:#1a1a1a;white-space:pre;transform:scaleX(0.880);transform-origin:0 50%;">Rendering finished.</div><div class="abs" style="left:181.00px;top:312.65px;font-size:4.4px;line-height:5.06px;color:#1a1a1a;white-space:pre;transform:scaleX(0.880);transform-origin:0 50%;">Parsing design (AST generation)...</div><div class="abs" style="left:181.00px;top:317.21px;font-size:4.4px;line-height:5.06px;color:#1a1a1a;white-space:pre;transform:scaleX(0.846);transform-origin:0 50%;">Saved backup file: C:/Users/willa/OneDrive/Documents/OpenSCAD/backups/c3dpendant-backup-XGF3mcac.scad</div><div class="abs" style="left:181.00px;top:321.76px;font-size:4.4px;line-height:5.06px;color:#1a1a1a;white-space:pre;transform:scaleX(0.880);transform-origin:0 50%;">Compiling design (CSG Tree generation)...</div><div class="abs" style="left:181.00px;top:326.32px;font-size:4.4px;line-height:5.06px;color:#1a1a1a;white-space:pre;transform:scaleX(0.880);transform-origin:0 50%;">Rendering Polygon Mesh using Manifold...</div><div class="abs" style="left:181.00px;top:330.87px;font-size:4.4px;line-height:5.06px;color:#1a1a1a;white-space:pre;transform:scaleX(0.880);transform-origin:0 50%;">Geometries in cache: 155</div><div class="abs" style="left:181.00px;top:335.43px;font-size:4.4px;line-height:5.06px;color:#1a1a1a;white-space:pre;transform:scaleX(0.880);transform-origin:0 50%;">Geometry cache size in bytes: 24903124</div><div class="abs" style="left:181.00px;top:339.99px;font-size:4.4px;line-height:5.06px;color:#1a1a1a;white-space:pre;transform:scaleX(0.880);transform-origin:0 50%;">CGAL Polyhedrons in cache: 180</div><div class="abs" style="left:181.00px;top:344.54px;font-size:4.4px;line-height:5.06px;color:#1a1a1a;white-space:pre;transform:scaleX(0.880);transform-origin:0 50%;">CGAL cache size in bytes: 0</div><div class="abs" style="left:181.00px;top:349.10px;font-size:4.4px;line-height:5.06px;color:#1a1a1a;white-space:pre;transform:scaleX(0.880);transform-origin:0 50%;">Total rendering time: 0:00:30.177</div><div class="abs" style="left:184.20px;top:353.65px;font-size:4.4px;line-height:5.06px;color:#1a1a1a;white-space:pre;transform:scaleX(0.880);transform-origin:0 50%;">Top level object is a 3D object (manifold):</div><div class="abs" style="left:184.50px;top:358.21px;font-size:4.4px;line-height:5.06px;color:#1a1a1a;white-space:pre;transform:scaleX(0.880);transform-origin:0 50%;">Status:</div><div class="abs" style="left:202.10px;top:358.21px;font-size:4.4px;line-height:5.06px;color:#1a1a1a;white-space:pre;transform:scaleX(0.880);transform-origin:0 50%;">NoError</div><div class="abs" style="left:184.50px;top:362.77px;font-size:4.4px;line-height:5.06px;color:#1a1a1a;white-space:pre;transform:scaleX(0.880);transform-origin:0 50%;">Genus:</div><div class="abs" style="left:203.40px;top:362.77px;font-size:4.4px;line-height:5.06px;color:#1a1a1a;white-space:pre;transform:scaleX(0.880);transform-origin:0 50%;">1</div><div class="abs" style="left:184.50px;top:367.32px;font-size:4.4px;line-height:5.06px;color:#1a1a1a;white-space:pre;transform:scaleX(0.880);transform-origin:0 50%;">Vertices:</div><div class="abs" style="left:210.00px;top:367.32px;font-size:4.4px;line-height:5.06px;color:#1a1a1a;white-space:pre;transform:scaleX(0.880);transform-origin:0 50%;">1949</div><div class="abs" style="left:184.50px;top:371.88px;font-size:4.4px;line-height:5.06px;color:#1a1a1a;white-space:pre;transform:scaleX(0.880);transform-origin:0 50%;">Facets:</div><div class="abs" style="left:209.10px;top:371.88px;font-size:4.4px;line-height:5.06px;color:#1a1a1a;white-space:pre;transform:scaleX(0.880);transform-origin:0 50%;">3914</div><div class="abs" style="left:181.00px;top:376.43px;font-size:4.4px;line-height:5.06px;color:#1a1a1a;white-space:pre;transform:scaleX(0.880);transform-origin:0 50%;">Measurements:</div><div class="abs" style="left:184.20px;top:380.99px;font-size:4.4px;line-height:5.06px;color:#1a1a1a;white-space:pre;transform:scaleX(0.880);transform-origin:0 50%;">Surface: 31903.45</div><div class="abs" style="left:184.20px;top:385.55px;font-size:4.4px;line-height:5.06px;color:#1a1a1a;white-space:pre;transform:scaleX(0.880);transform-origin:0 50%;">Volume: 41843.80</div><div class="abs" style="left:181.00px;top:390.10px;font-size:4.4px;line-height:5.06px;color:#1a1a1a;white-space:pre;transform:scaleX(0.880);transform-origin:0 50%;">Rendering finished.</div><div class="abs" style="left:181.00px;top:394.66px;font-size:4.4px;line-height:5.06px;color:#1a1a1a;white-space:pre;transform:scaleX(0.879);transform-origin:0 50%;">STL (binary) export finished: C:/Users/willa/OneDrive/Desktop/pendant/c3dpendant_bottom_rounded_height.stl</div>
<div class="abs" style="left:180px;top:401px;width:21.3px;height:6.5px;background:#f9f9f9"></div>
<div class="abs" style="left:183.90px;top:403.26px;font-size:4.6px;line-height:5.29px;color:#1a1a1a;white-space:pre;transform:scaleX(0.788);transform-origin:0 50%;">Console</div><div class="abs" style="left:205.40px;top:403.26px;font-size:4.6px;line-height:5.29px;color:#1a1a1a;white-space:pre;transform:scaleX(0.876);transform-origin:0 50%;">Error Log</div>
<svg class="abs" style="left:179px;top:269px" width="432" height="13" viewBox="179 269 432 13"><rect x="341" y="269.7" width="10.5" height="10" fill="#cce4f7"/><rect x="363.7" y="269.7" width="20.6" height="10" fill="#cce4f7"/><path d="M182 273.2 L185 271.3 L188 273.2 L188 276.2 L185 278.1 L182 276.2Z" fill="none" stroke="#222" stroke-width="0.6"/><path d="M183.5 276 H186.5 V277.5 H183.5Z" fill="#222"/><path d="M183.8 273.6 L185 274.8 L186.2 273.6" stroke="#222" stroke-width="0.5" fill="none"/><path d="M192 273.2 L195 271.3 L198 273.2 L198 276.2 L195 278.1 L192 276.2Z" fill="none" stroke="#222" stroke-width="0.6"/><path d="M193.5 276 H196.5 V277.5 H193.5Z" fill="#222"/><path d="M193.8 273.6 L195 274.8 L196.2 273.6" stroke="#222" stroke-width="0.5" fill="none"/><path d="M204 271.5 h1.5 M204 271.5 v1.5 M210.5 271.5 h-1.5 M210.5 271.5 v1.5 M204 277.5 h1.5 M204 277.5 v-1.5" stroke="#222" stroke-width="0.6"/><circle cx="207" cy="274.3" r="1.7" fill="none" stroke="#222" stroke-width="0.6"/><path d="M208.2 275.5 L210.6 278" stroke="#222" stroke-width="1.1"/><circle cx="217.4" cy="273.8" r="2.2" fill="none" stroke="#222" stroke-width="0.6"/><path d="M218.9 275.3 L220.70000000000002 277.9" stroke="#222" stroke-width="1.1"/><path d="M216.4 273.8 h2" stroke="#222" stroke-width="0.5"/><circle cx="228" cy="273.8" r="2.2" fill="none" stroke="#222" stroke-width="0.6"/><path d="M229.5 275.3 L231.3 277.9" stroke="#222" stroke-width="1.1"/><path d="M227 273.8 h2" stroke="#222" stroke-width="0.5"/><path d="M217.4 272.8 v2" stroke="#222" stroke-width="0.5"/><path d="M237 272.3 A2.8 2.8 0 1 0 240.4 272.4" fill="none" stroke="#222" stroke-width="0.6"/><path d="M236 271.4 L237.8 271.6 L237.3 273.4Z" fill="#222"/><rect x="245.8" y="271.4" width="2.8" height="2.8" fill="#222"/><rect x="249.2" y="271.4" width="2.8" height="2.8" fill="#555"/><rect x="245.8" y="274.8" width="2.8" height="2.8" fill="#555"/><rect x="249.2" y="274.8" width="2.8" height="2.8" fill="#222"/><path d="M259.3 271.3 L262.6 274.4 L259.3 277.8 L256 274.4Z" fill="#222"/><path d="M257.5 274.4 L259.3 272.8 L261.1 274.4" stroke="#eee" stroke-width="0.5" fill="none"/><circle cx="269.2" cy="274.5" r="3" fill="none" stroke="#222" stroke-width="0.55"/><rect x="275.5" y="270.5" width="0.4" height="8" fill="#d6d6d6"/><path d="M279.8 273.6 H284.5" stroke="#222" stroke-width="0.7"/><path d="M279.5 273.6 L281.1 272.4 L281.1 274.8Z" fill="#222"/><path d="M282.5 272 V279.5" stroke="none"/><path d="M282.7 271.6 V275.8" stroke="#222" stroke-width="0.7"/><path d="M283.5 275 L285.5 277" stroke="#222" stroke-width="0.6"/><text x="284.8" y="278.6" font-size="3.4" fill="#222" font-family="Liberation Sans">z</text><path d="M289.6 273.6 H294.3" stroke="#222" stroke-width="0.7"/><path d="M289.3 273.6 L290.90000000000003 272.4 L290.90000000000003 274.8Z" fill="#222"/><path d="M292.3 272 V289.3" stroke="none"/><path d="M292.5 271.6 V275.8" stroke="#222" stroke-width="0.7"/><path d="M293.3 275 L295.3 277" stroke="#222" stroke-width="0.6"/><text x="294.6" y="278.6" font-size="3.4" fill="#222" font-family="Liberation Sans">x</text><path d="M300.8 273.6 H305.5" stroke="#222" stroke-width="0.7"/><path d="M300.5 273.6 L302.1 272.4 L302.1 274.8Z" fill="#222"/><path d="M303.5 272 V300.5" stroke="none"/><path d="M303.7 271.6 V275.8" stroke="#222" stroke-width="0.7"/><path d="M304.5 275 L306.5 277" stroke="#222" stroke-width="0.6"/><text x="305.8" y="278.6" font-size="3.4" fill="#222" font-family="Liberation Sans">y</text><path d="M311.0 273.6 H315.7" stroke="#222" stroke-width="0.7"/><path d="M310.7 273.6 L312.3 272.4 L312.3 274.8Z" fill="#222"/><path d="M313.7 272 V310.7" stroke="none"/><path d="M313.9 271.6 V275.8" stroke="#222" stroke-width="0.7"/><path d="M314.7 275 L316.7 277" stroke="#222" stroke-width="0.6"/><text x="316.0" y="278.6" font-size="3.4" fill="#222" font-family="Liberation Sans">y</text><path d="M324.2 271.2 V276" stroke="#222" stroke-width="0.7"/><path d="M322.8 272.6 L324.2 271 L325.59999999999997 272.6Z" fill="#222"/><path d="M322.0 274.2 H326.4" stroke="#222" stroke-width="0.7"/><text x="326.5" y="278.6" font-size="3.4" fill="#222" font-family="Liberation Sans">z</text><path d="M334.6 271.2 V276" stroke="#222" stroke-width="0.7"/><path d="M333.20000000000005 272.6 L334.6 271 L336.0 272.6Z" fill="#222"/><path d="M332.40000000000003 274.2 H336.8" stroke="#222" stroke-width="0.7"/><text x="336.90000000000003" y="278.6" font-size="3.4" fill="#222" font-family="Liberation Sans">z</text><path d="M343 273.8 L346.5 272.2 L350 273 L350 276.5 L346.5 278.2 L343 277Z" fill="none" stroke="#1d3f6e" stroke-width="0.6"/><path d="M346.5 274.5 L349.8 271" stroke="#1d3f6e" stroke-width="0.6"/><rect x="353.4" y="271.4" width="6.4" height="6.4" rx="1" fill="none" stroke="#222" stroke-width="0.6"/><path d="M355.5 271.5 V277.8 M353.4 274 H359.8" stroke="#222" stroke-width="0.5"/><rect x="356" y="272" width="3" height="2" fill="#555"/><path d="M366.5 277.8 L369.3 274.6 L372.3 276.3 M369.3 274.6 L369.3 271.5" stroke="#3a5a8a" stroke-width="0.55" fill="none"/><path d="M377 277.8 L379.8 274.6 L382.5 276.3 M379.8 274.6 L379.8 271.5" stroke="#3a5a8a" stroke-width="0.55" fill="none"/><path d="M380.5 277 h2 M381 276 h1.5" stroke="#3a5a8a" stroke-width="0.4"/><rect x="386.6" y="272.2" width="6" height="4.6" fill="none" stroke="#222" stroke-width="0.6" stroke-dasharray="1 0.4"/></svg>
<div class="abs" style="left:611.5px;top:14px;width:78.5px;height:394px;background:#f0f0f0"></div>
<div class="abs" style="left:612px;top:14px;width:78px;height:7px;background:#d9d9d9"></div>
<div class="abs" style="left:612.90px;top:15.84px;font-size:4.8px;line-height:5.52px;color:#1a1a1a;white-space:pre;transform:scaleX(0.787);transform-origin:0 50%;">Customizer</div>
<svg class="abs" style="left:684.5px;top:15.8px" width="4" height="4" viewBox="0 0 4 4"><path d="M0.6 0.6 L3.4 3.4 M3.4 0.6 L0.6 3.4" stroke="#222" stroke-width="0.8"/></svg>
<div class="abs" style="left:612.1px;top:23px;width:4.9px;height:5.2px;background:#1f5fbf;border-radius:0.6px"></div>
<div class="abs" style="left:618.70px;top:23.86px;font-size:4.6px;line-height:5.29px;color:#1a1a1a;white-space:pre;transform:scaleX(0.837);transform-origin:0 50%;">Automatic Preview</div>
<div class="abs" style="left:652px;top:22.5px;width:36px;height:6.4px;background:#fdfdfd;border:0.4px solid #e6e6e6"></div>
<div class="abs" style="left:653.10px;top:23.86px;font-size:4.6px;line-height:5.29px;color:#1a1a1a;white-space:pre;transform:scaleX(0.834);transform-origin:0 50%;">Show Details</div>
<svg class="abs" style="left:684px;top:25px" width="3" height="2" viewBox="0 0 3 2"><path d="M0.3 0.4 L1.5 1.5 L2.7 0.4" stroke="#777" stroke-width="0.4" fill="none"/></svg>
<div class="abs" style="left:612.5px;top:30px;width:55px;height:7.2px;background:#fdfdfd;border:0.4px solid #e6e6e6"></div>
<div class="abs" style="left:612.90px;top:31.95px;font-size:4.6px;line-height:5.29px;color:#1a1a1a;white-space:pre;transform:scaleX(0.853);transform-origin:0 50%;">&lt;design default&gt;</div>
<svg class="abs" style="left:663px;top:32.8px" width="3" height="2" viewBox="0 0 3 2"><path d="M0.3 0.4 L1.5 1.5 L2.7 0.4" stroke="#777" stroke-width="0.4" fill="none"/></svg>
<div class="abs" style="left:669.5px;top:30px;width:8.5px;height:7.2px;background:#fdfdfd;border:0.4px solid #e6e6e6"></div>
<div class="abs" style="left:672.6px;top:33.2px;width:2px;height:1.2px;background:#222"></div>
<div class="abs" style="left:680px;top:30px;width:8px;height:7.2px;background:#f6f6f6;border:0.4px solid #ececec"></div>
<div class="abs" style="left:683px;top:33.5px;width:2px;height:0.5px;background:#aaa"></div>
<div class="abs" style="left:612.3px;top:38.6px;width:75.7px;height:7.4px;background:#cce4f7;border:0.5px solid #99c9ef"></div>
<svg class="abs" style="left:614px;top:41px" width="4" height="3" viewBox="0 0 4 3"><path d="M0 0 H4 L2 2.6Z" fill="#111"/></svg>
<div class="abs" style="left:619.30px;top:41.25px;font-size:4.6px;line-height:5.29px;color:#1a1a1a;white-space:pre;transform:scaleX(0.803);transform-origin:0 50%;">Parameters</div>
<div class="abs" style="left:612.3px;top:46px;width:75.7px;height:361.8px;border-left:0.6px solid #d0d0d0;border-right:0.6px solid #d0d0d0;border-bottom:0.6px solid #d0d0d0"></div>
<div class="abs" style="left:613.50px;top:47.45px;font-size:4.6px;line-height:5.29px;color:#111;white-space:pre;transform:scaleX(0.963);transform-origin:0 50%;font-weight:bold;">file</div>
<div class="abs" style="left:651.5px;top:46.3px;width:32.5px;height:6.4px;background:#fff;border-bottom:0.5px solid #d6d6d6"></div>
<div class="abs" style="left:675.50px;top:47.45px;font-size:4.6px;line-height:5.29px;color:#1a1a1a;white-space:pre;transform:scaleX(0.834);transform-origin:0 50%;">180</div>
<svg class="abs" style="left:684.4px;top:46.8px" width="3" height="5" viewBox="0 0 3 5"><path d="M0.3 2 L1.5 0.4 L2.7 2 Z M0.3 3 L1.5 4.6 L2.7 3Z" fill="#333"/></svg>

<div class="abs" style="left:0;top:407.5px;width:690px;height:6.5px;background:#f0f0f0"></div>
<div class="abs" style="left:0.50px;top:409.16px;font-size:4.6px;line-height:5.29px;color:#1a1a1a;white-space:pre;transform:scaleX(0.874);transform-origin:0 50%;">Viewport: translate = [ 148.17 132.90 12.80 ], rotate = [ 246.10 0.00 326.20 ], distance = 352.84, fov = 22.50 (1800x1065)</div><div class="abs" style="left:607.00px;top:409.16px;font-size:4.6px;line-height:5.29px;color:#1a1a1a;white-space:pre;transform:scaleX(0.840);transform-origin:0 50%;">PythonSCAD 0.8.14 (git b0a01e06) OpenSCAD 2025</div>
</body></html>
